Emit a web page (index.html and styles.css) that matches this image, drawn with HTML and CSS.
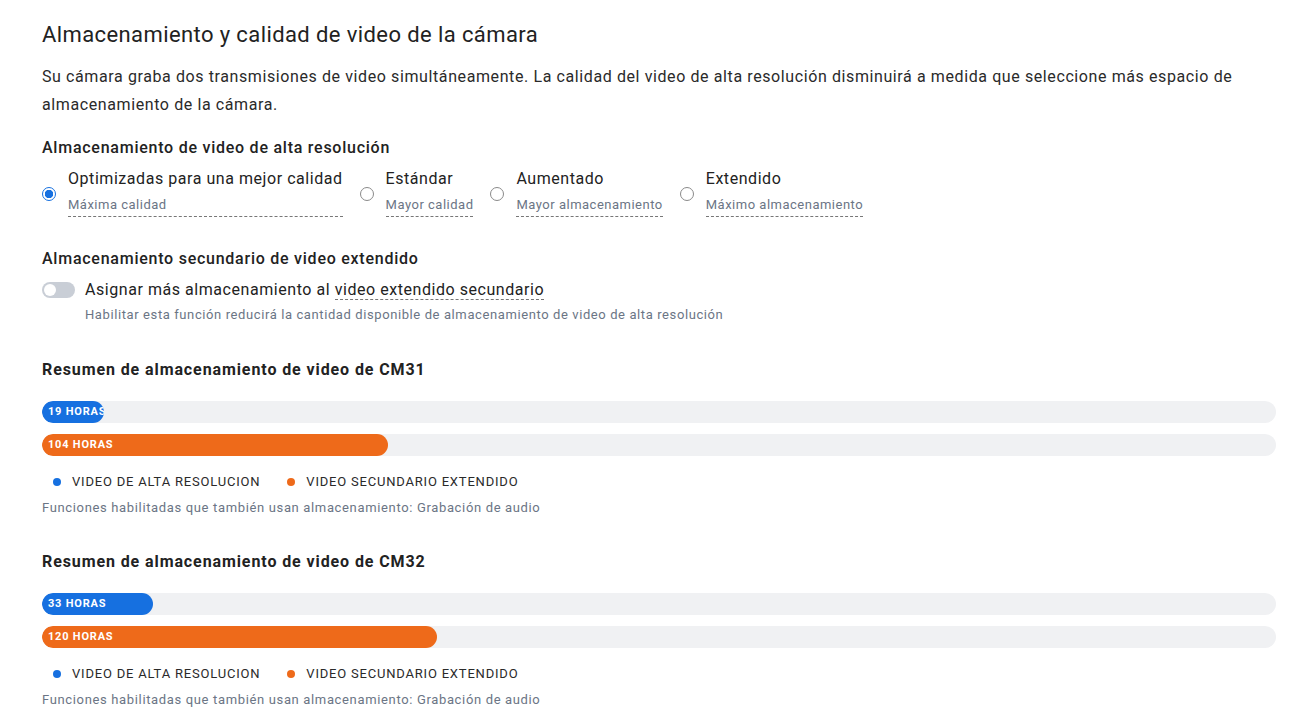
FILE: index.html
```html
<!DOCTYPE html>
<html lang="es">
<head>
  <meta charset="UTF-8">
  <title>Almacenamiento</title>
  <link rel="stylesheet" href="styles.css">
</head>
<body>
  <div class="page">
    <h1>Almacenamiento y calidad de video de la cámara</h1>
    <p class="intro">Su cámara graba dos transmisiones de video simultáneamente. La calidad del video de alta resolución disminuirá a medida que seleccione más espacio de almacenamiento de la cámara.</p>

    <h3 class="group-title">Almacenamiento de video de alta resolución</h3>
    <div class="radio-row">
      <label class="radio-option">
        <span class="radio checked"></span>
        <span class="radio-text">
          <span class="radio-label">Optimizadas para una mejor calidad</span>
          <span class="radio-sub">Máxima calidad</span>
        </span>
      </label>
      <label class="radio-option">
        <span class="radio"></span>
        <span class="radio-text">
          <span class="radio-label">Estándar</span>
          <span class="radio-sub">Mayor calidad</span>
        </span>
      </label>
      <label class="radio-option">
        <span class="radio"></span>
        <span class="radio-text">
          <span class="radio-label">Aumentado</span>
          <span class="radio-sub">Mayor almacenamiento</span>
        </span>
      </label>
      <label class="radio-option">
        <span class="radio"></span>
        <span class="radio-text">
          <span class="radio-label">Extendido</span>
          <span class="radio-sub">Máximo almacenamiento</span>
        </span>
      </label>
    </div>

    <h3 class="group-title second">Almacenamiento secundario de video extendido</h3>
    <div class="toggle-row">
      <span class="toggle"><span class="knob"></span></span>
      <span class="toggle-label">Asignar más almacenamiento al <span class="dashed">video extendido secundario</span></span>
    </div>
    <div class="toggle-help">Habilitar esta función reducirá la cantidad disponible de almacenamiento de video de alta resolución</div>

    <div class="summary">
      <h4>Resumen de almacenamiento de video de CM31</h4>
      <div class="track"><div class="fill blue" style="width: 62px;">19 HORAS</div></div>
      <div class="track"><div class="fill orange" style="width: 346px;">104 HORAS</div></div>
      <div class="legend">
        <span class="legend-item"><span class="dot blue"></span>VIDEO DE ALTA RESOLUCION</span>
        <span class="legend-item"><span class="dot orange"></span>VIDEO SECUNDARIO EXTENDIDO</span>
      </div>
      <div class="note">Funciones habilitadas que también usan almacenamiento: Grabación de audio</div>
    </div>

    <div class="summary">
      <h4>Resumen de almacenamiento de video de CM32</h4>
      <div class="track"><div class="fill blue" style="width: 111px;">33 HORAS</div></div>
      <div class="track"><div class="fill orange" style="width: 395px;">120 HORAS</div></div>
      <div class="legend">
        <span class="legend-item"><span class="dot blue"></span>VIDEO DE ALTA RESOLUCION</span>
        <span class="legend-item"><span class="dot orange"></span>VIDEO SECUNDARIO EXTENDIDO</span>
      </div>
      <div class="note">Funciones habilitadas que también usan almacenamiento: Grabación de audio</div>
    </div>
  </div>
</body>
</html>
```

FILE: styles.css
```css
:root {
  --text-color: #222222;
  --muted-color: #6b7585;
  --blue: #1670e0;
  --orange: #ee6a1a;
  --track-bg: #f0f1f3;
}

body {
  margin: 0;
  font-family: 'Roboto', 'Liberation Sans', sans-serif;
  color: var(--text-color);
  background: #ffffff;
  letter-spacing: 0.55px;
}
.page {
  padding: 20px 18px 0 42px;
}
h1 {
  font-size: 22px;
  font-weight: 400;
  margin: 0 0 13px;
  line-height: 30px;
  letter-spacing: 0.4px;
}
.intro {
  font-size: 16px;
  line-height: 28px;
  margin: 0 0 18px;
  color: #2a2a2a;
  letter-spacing: 0.6px;
}
.group-title {
  font-size: 16px;
  font-weight: 500;
  margin: 0;
  line-height: 22px;
  letter-spacing: 0.75px;
}
.group-title.second {
  margin-top: 31px;
}
.radio-row {
  display: flex;
  gap: 17px;
  margin-top: 9px;
}
.radio-option {
  display: flex;
  align-items: center;
  gap: 12px;
}
.radio {
  width: 12px;
  height: 12px;
  border: 1px solid #8a8a8a;
  border-radius: 50%;
  box-sizing: content-box;
  margin-top: 2px;
}
.radio.checked {
  border-color: var(--blue);
  background: radial-gradient(circle, var(--blue) 0 4px, #fff 4.5px);
}
.radio-text {
  display: flex;
  flex-direction: column;
}
.radio-label {
  font-size: 16px;
  line-height: 22px;
}
.radio-sub {
  font-size: 13px;
  line-height: 18px;
  color: var(--muted-color);
  border-bottom: 1px dashed #777;
  padding-bottom: 2px;
  margin-top: 6px;
  letter-spacing: 0.5px;
}
.toggle-row {
  display: flex;
  align-items: center;
  gap: 10px;
  margin-top: 9px;
}
.toggle {
  width: 33px;
  height: 16px;
  border-radius: 8px;
  background: #c9ced6;
  position: relative;
}
.knob {
  position: absolute;
  left: 2px;
  top: 2px;
  width: 12px;
  height: 12px;
  border-radius: 50%;
  background: #ffffff;
}
.toggle-label {
  font-size: 16px;
  line-height: 22px;
}
.dashed {
  border-bottom: 1px dashed #777;
}
.toggle-help {
  font-size: 13px;
  color: var(--muted-color);
  margin: 5px 0 0 43px;
  line-height: 18px;
  letter-spacing: 0.6px;
}
.summary {
  margin-top: 35px;
}
.summary + .summary {
  margin-top: 34px;
}
.summary h4 {
  font-size: 16px;
  font-weight: 700;
  margin: 0 0 20px;
  line-height: 22px;
  letter-spacing: 0.9px;
}
.track {
  height: 22px;
  border-radius: 11px;
  background: var(--track-bg);
  margin-bottom: 11px;
  overflow: hidden;
}
.fill {
  height: 100%;
  border-radius: 11px;
  color: #ffffff;
  font-size: 11px;
  font-weight: 700;
  line-height: 22px;
  padding-left: 6px;
  box-sizing: border-box;
  white-space: nowrap;
  overflow: hidden;
  letter-spacing: 0.8px;
}
.fill.blue { background: var(--blue); }
.fill.orange { background: var(--orange); }
.legend {
  display: flex;
  gap: 27px;
  margin: 17px 0 0 11px;
  font-size: 13px;
  line-height: 18px;
  letter-spacing: 0.8px;
  color: #2a2a2a;
}
.legend-item {
  display: flex;
  align-items: center;
}
.dot {
  width: 8px;
  height: 8px;
  border-radius: 50%;
  margin-right: 11px;
}
.dot.blue { background: var(--blue); }
.dot.orange { background: var(--orange); }
.note {
  font-size: 13px;
  color: var(--muted-color);
  margin-top: 8px;
  line-height: 18px;
  letter-spacing: 0.65px;
}
```
